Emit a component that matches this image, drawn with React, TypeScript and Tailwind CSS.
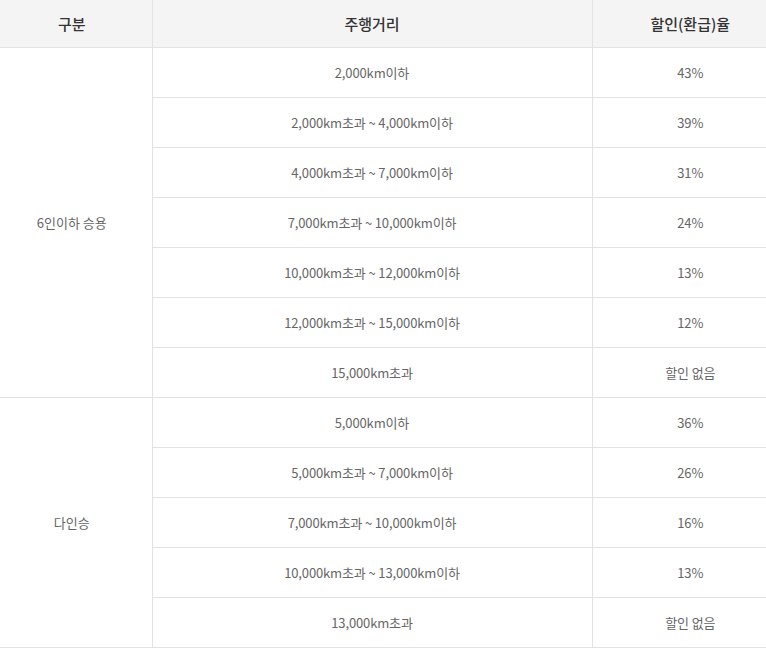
import React from "react";

type Group = { label: string; rows: [string, string][] };

const groups: Group[] = [
  {
    label: "6인이하 승용",
    rows: [
      ["2,000km이하", "43%"],
      ["2,000km초과 ~ 4,000km이하", "39%"],
      ["4,000km초과 ~ 7,000km이하", "31%"],
      ["7,000km초과 ~ 10,000km이하", "24%"],
      ["10,000km초과 ~ 12,000km이하", "13%"],
      ["12,000km초과 ~ 15,000km이하", "12%"],
      ["15,000km초과", "할인 없음"],
    ],
  },
  {
    label: "다인승",
    rows: [
      ["5,000km이하", "36%"],
      ["5,000km초과 ~ 7,000km이하", "26%"],
      ["7,000km초과 ~ 10,000km이하", "16%"],
      ["10,000km초과 ~ 13,000km이하", "13%"],
      ["13,000km초과", "할인 없음"],
    ],
  },
];

const font = "font-['Noto_Sans_CJK_KR','Noto_Sans',sans-serif]";

export default function App() {
  return (
    <div className={`h-[661px] w-[766px] overflow-hidden bg-white ${font}`}>
      <table className="w-[766px] table-fixed border-collapse">
        <colgroup>
          <col className="w-[152px]" />
          <col className="w-[440px]" />
          <col className="w-[174px]" />
        </colgroup>
        <thead>
          <tr className="h-[47px] bg-[#f4f4f4] text-[15px] text-[#333]">
            <th className="border-b border-r border-[#e2e2e2] pr-2 pt-[2px] font-medium">구분</th>
            <th className="border-b border-r border-[#e2e2e2] pt-[2px] font-medium">주행거리</th>
            <th className="border-b border-[#e2e2e2] pl-[22px] pt-[2px] font-medium">할인(환급)율</th>
          </tr>
        </thead>
        <tbody className="text-[13px] tracking-[-0.01em] text-[#666]">
          {groups.map((g) =>
            g.rows.map(([range, rate], i) => (
              <tr key={g.label + i} className="h-[50px]">
                {i === 0 && (
                  <td
                    rowSpan={g.rows.length}
                    className="border-b border-r border-[#e2e2e2] pr-2 pt-[2px] text-center tracking-normal"
                  >
                    {g.label}
                  </td>
                )}
                <td className="border-b border-r border-[#e2e2e2] pt-[2px] text-center">{range}</td>
                <td className="border-b border-[#e2e2e2] pl-[22px] pt-[2px] text-center">{rate}</td>
              </tr>
            ))
          )}
        </tbody>
      </table>
    </div>
  );
}
